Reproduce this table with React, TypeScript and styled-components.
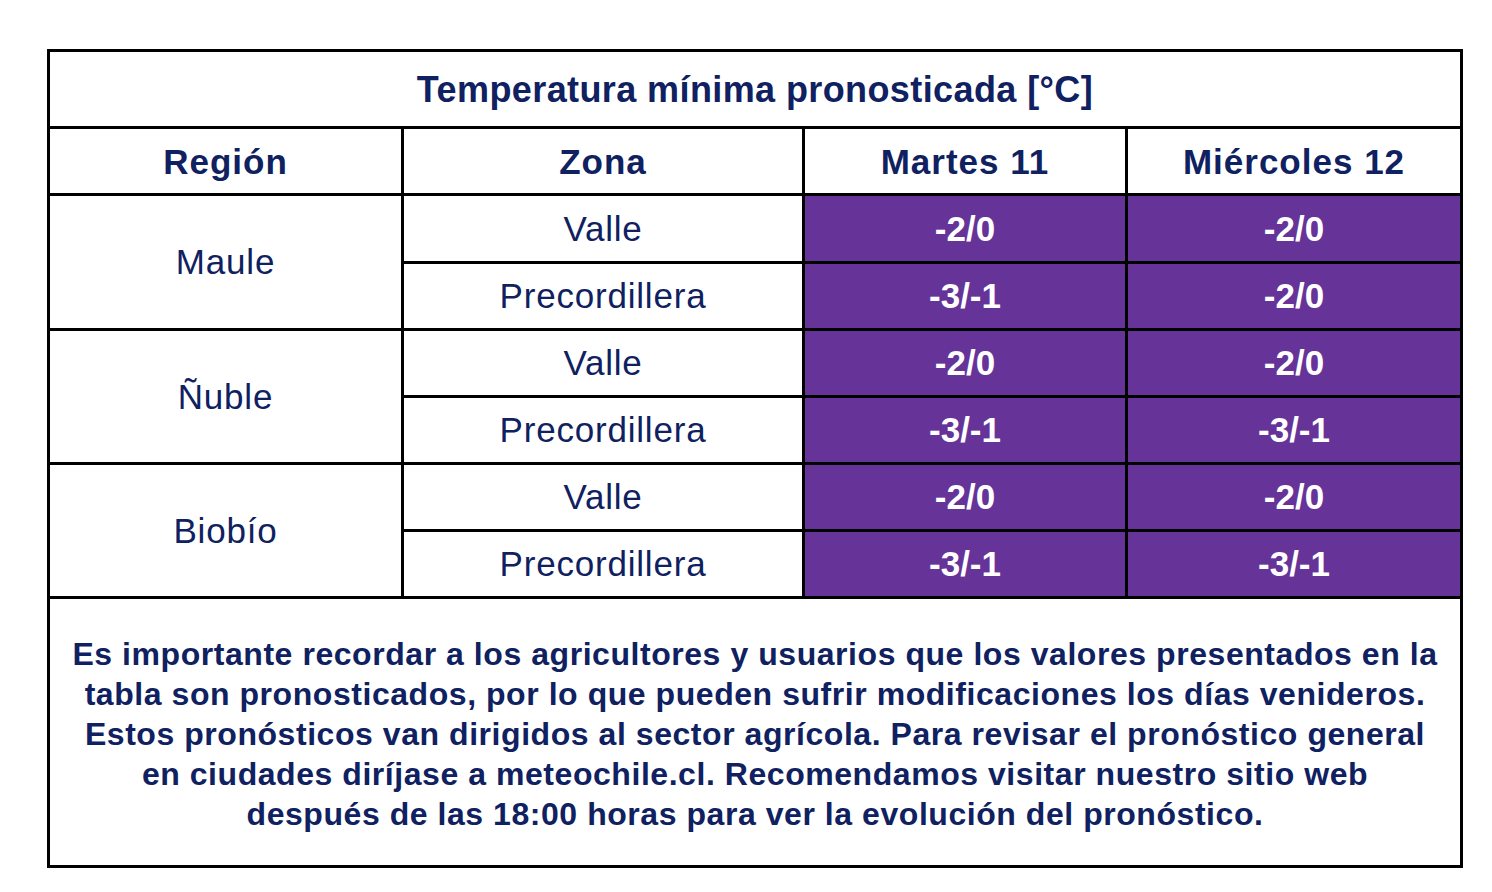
import React from 'react'
import styled, { createGlobalStyle } from 'styled-components'

const GlobalStyle = createGlobalStyle`
  html, body {
    margin: 0;
    padding: 0;
    background: #ffffff;
  }
  body {
    font-family: 'Liberation Sans', Arial, sans-serif;
  }
`

const Page = styled.div`
  padding: 49px 0 0 47px;
`

const Table = styled.div`
  box-sizing: border-box;
  width: 1416px;
  display: grid;
  grid-template-columns: 351px 398px 320px 332px;
  grid-template-rows: 74px 64px 65px 64px 64px 64px 64px 64px 266px;
  gap: 3px;
  padding: 3px;
  background: #000000;
  color: #0f2160;
`

const Cell = styled.div<{ span?: number; rows?: number; value?: boolean }>`
  display: flex;
  align-items: center;
  justify-content: center;
  text-align: center;
  background: ${props => (props.value ? '#663399' : '#ffffff')};
  color: ${props => (props.value ? '#ffffff' : 'inherit')};
  grid-column: ${props => (props.span ? `span ${props.span}` : 'auto')};
  grid-row: ${props => (props.rows ? `span ${props.rows}` : 'auto')};
  font-size: 35px;
  font-weight: ${props => (props.value ? 700 : 400)};
  letter-spacing: ${props => (props.value ? '0' : '0.8px')};
`

const Title = styled(Cell)`
  font-size: 36px;
  font-weight: 700;
  letter-spacing: 0.4px;
  padding-top: 2px;
`

const Head = styled(Cell)`
  font-size: 35px;
  font-weight: 700;
  letter-spacing: 1px;
  padding-top: 2px;
`

const Note = styled(Cell)`
  font-size: 32px;
  font-weight: 700;
  line-height: 40px;
  letter-spacing: 0.55px;
  padding: 4px 0 0;
`

type Row = { region: string; zones: { zona: string; mar: string; mie: string }[] }

const data: Row[] = [
  {
    region: 'Maule',
    zones: [
      { zona: 'Valle', mar: '-2/0', mie: '-2/0' },
      { zona: 'Precordillera', mar: '-3/-1', mie: '-2/0' },
    ],
  },
  {
    region: 'Ñuble',
    zones: [
      { zona: 'Valle', mar: '-2/0', mie: '-2/0' },
      { zona: 'Precordillera', mar: '-3/-1', mie: '-3/-1' },
    ],
  },
  {
    region: 'Biobío',
    zones: [
      { zona: 'Valle', mar: '-2/0', mie: '-2/0' },
      { zona: 'Precordillera', mar: '-3/-1', mie: '-3/-1' },
    ],
  },
]

const App: React.FC = () => (
  <Page>
    <GlobalStyle />
    <Table>
      <Title span={4}>Temperatura mínima pronosticada [°C]</Title>
      <Head>Región</Head>
      <Head>Zona</Head>
      <Head>Martes 11</Head>
      <Head>Miércoles 12</Head>
      {data.map(row =>
        row.zones.map((z, i) => (
          <React.Fragment key={row.region + z.zona}>
            {i === 0 && <Cell rows={row.zones.length}>{row.region}</Cell>}
            <Cell>{z.zona}</Cell>
            <Cell value>{z.mar}</Cell>
            <Cell value>{z.mie}</Cell>
          </React.Fragment>
        ))
      )}
      <Note span={4}>
        Es importante recordar a los agricultores y usuarios que los valores presentados en la
        <br />
        tabla son pronosticados, por lo que pueden sufrir modificaciones los días venideros.
        <br />
        Estos pronósticos van dirigidos al sector agrícola. Para revisar el pronóstico general
        <br />
        en ciudades diríjase a meteochile.cl. Recomendamos visitar nuestro sitio web
        <br />
        después de las 18:00 horas para ver la evolución del pronóstico.
      </Note>
    </Table>
  </Page>
)

export default App
